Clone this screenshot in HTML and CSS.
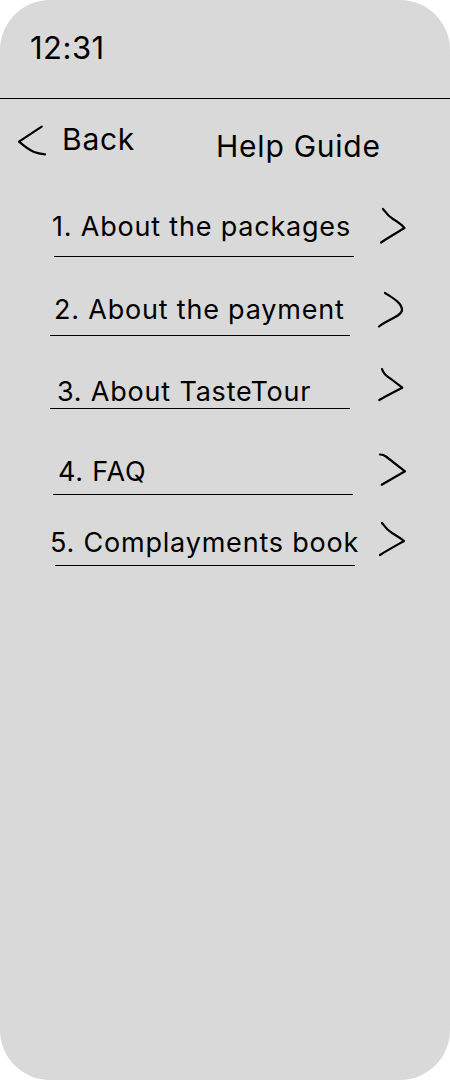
FILE: index.html
```html
<!DOCTYPE html>
<html lang="en">
<head>
<meta charset="utf-8">
<title>Help Guide</title>
<link rel="stylesheet" href="styles.css">
</head>
<body>
<div class="phone">
  <div class="status"><span class="time">12:31</span></div>
  <div class="header">
    <a class="back" href="#">
      <svg class="back-icon" width="32" height="33" viewBox="0 0 32 33"><path d="M25.7 2.7 L3 17.7 C8 22 13 26 18 28 C22 29.5 26 30 29 30.3"/></svg>
      <span class="back-label">Back</span>
    </a>
    <h1 class="title">Help Guide</h1>
  </div>
  <ul class="menu">
    <li class="menu-item item-1">
      <a class="menu-link" href="#"><span class="menu-text">1. About the packages</span></a>
      <svg class="chev" width="32" height="40" viewBox="0 0 32 40"><path d="M5 3 C8 7 10 10 15 13 C20 16 24 19 26.5 22 C20 26 11 31 3 36.5"/></svg>
    </li>
    <li class="menu-item item-2">
      <a class="menu-link" href="#"><span class="menu-text">2. About the payment</span></a>
      <svg class="chev" width="32" height="40" viewBox="0 0 32 40"><path d="M8 3 C16 8 25 13 25 20 C25 26 10 30 2 36.5"/></svg>
    </li>
    <li class="menu-item item-3">
      <a class="menu-link" href="#"><span class="menu-text">3. About TasteTour</span></a>
      <svg class="chev" width="32" height="40" viewBox="0 0 32 40"><path d="M5 2 C6 6 9 9 14 12 L25.3 20.7 C17 25 9 29 2.3 33"/></svg>
    </li>
    <li class="menu-item item-4">
      <a class="menu-link" href="#"><span class="menu-text">4. FAQ</span></a>
      <svg class="chev" width="32" height="40" viewBox="0 0 32 40"><path d="M3 2.5 C5 2.5 7 3 9 4.5 L28 19.3 L4.7 32.7"/></svg>
    </li>
    <li class="menu-item item-5">
      <a class="menu-link" href="#"><span class="menu-text">5. Complayments book</span></a>
      <svg class="chev" width="32" height="40" viewBox="0 0 32 40"><path d="M5 3 C8 7 10 10 15 13 C20 16 24 18.5 27 21 C20 25 11 30 3 35"/></svg>
    </li>
  </ul>
</div>
</body>
</html>
```
FILE: styles.css
```css
html, body {
  margin: 0;
  padding: 0;
  background: #ffffff;
}

body {
  font-family: Inter, "Noto Sans", sans-serif;
  color: #000000;
}

.phone {
  width: 450px;
  height: 1080px;
  border-radius: 50px;
  background: #d9d9d9;
  overflow: hidden;
}

.status {
  height: 99px;
  box-sizing: border-box;
  border-bottom: 1px solid #000000;
  padding: 29px 0 0 30px;
}

.time {
  display: block;
  font-size: 31px;
  line-height: 38px;
  letter-spacing: 0.5px;
}

.header {
  display: flex;
  align-items: flex-start;
  padding-left: 16px;
}

.back {
  display: flex;
  align-items: flex-start;
  color: #000000;
  text-decoration: none;
}

.back-icon {
  margin-top: 25px;
  flex: none;
}

.back-icon path,
.chev path {
  fill: none;
  stroke: #000000;
  stroke-width: 2.2;
  stroke-linecap: round;
  stroke-linejoin: round;
}

.back-label {
  font-size: 30px;
  line-height: 36px;
  letter-spacing: 0.75px;
  margin-top: 22px;
  margin-left: 14px;
}

.title {
  margin: 29px 0 0 81px;
  font-size: 30px;
  font-weight: 400;
  line-height: 36px;
  letter-spacing: 0.75px;
}

.menu {
  list-style: none;
  margin: 0;
  padding: 0;
}

.menu-item {
  display: flex;
  align-items: flex-start;
}

.menu-link {
  display: block;
  width: 300px;
  box-sizing: border-box;
  border-bottom: 1px solid #000000;
  color: #000000;
  text-decoration: none;
  flex: none;
}

.menu-text {
  display: block;
  font-size: 27px;
  line-height: 33px;
  letter-spacing: 0.8px;
  white-space: nowrap;
}

.chev {
  flex: none;
}

/* row 1 */
.item-1 { margin-top: 42px; padding-left: 54px; }
.item-1 .menu-link { margin-top: 4px; padding-bottom: 13px; }
.item-1 .menu-text { margin-left: -2px; }
.item-1 .chev { margin-left: 24px; }

/* row 2 */
.item-2 { margin-top: 33px; padding-left: 50px; }
.item-2 .menu-link { margin-top: 3px; padding-bottom: 9px; }
.item-2 .menu-text { margin-left: 4px; }
.item-2 .chev { margin-left: 27px; }

/* row 3 */
.item-3 { margin-top: 31px; padding-left: 50px; }
.item-3 .menu-link { margin-top: 8px; padding-bottom: 0; }
.item-3 .menu-text { margin-left: 7px; }
.item-3 .chev { margin-left: 27px; }

/* row 4 */
.item-4 { margin-top: 43px; padding-left: 53px; }
.item-4 .menu-link { margin-top: 3px; padding-bottom: 6px; }
.item-4 .menu-text { margin-left: 5px; }
.item-4 .chev { margin-left: 24px; }

/* row 5 */
.item-5 { margin-top: 25px; padding-left: 55px; }
.item-5 .menu-link { margin-top: 6px; padding-bottom: 6px; }
.item-5 .menu-text { margin-left: -5px; }
.item-5 .chev { margin-left: 22px; }
```
